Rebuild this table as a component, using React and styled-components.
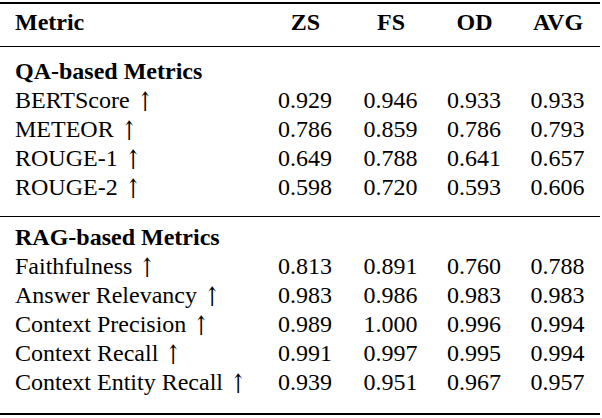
import React from 'react'
import styled, { createGlobalStyle } from 'styled-components'

const GlobalStyle = createGlobalStyle`
  body { margin: 0; background: #fff; }
`

const Table = styled.table`
  margin-top: 2px;
  width: 600px;
  border-collapse: separate;
  border-spacing: 0;
  table-layout: fixed;
  font-family: "Liberation Serif", "Times New Roman", serif;
  font-size: 24px;
  line-height: 29px;
  color: #000;
`

const HeadCell = styled.th`
  box-sizing: border-box;
  width: ${p => p.$w}px;
  padding: 4px 0 9px;
  padding-left: ${p => (p.$left ? '15px' : '0')};
  text-align: ${p => (p.$left ? 'left' : 'center')};
  font-weight: bold;
  border-top: 2px solid #000;
  border-bottom: 1px solid #000;
`

const Row = styled.tr`
  td {
    height: 29px;
    padding-top: ${p => p.$pt || 0}px;
    padding-bottom: ${p => p.$pb || 0}px;
    border-bottom: ${p => (p.$rule ? `${p.$rule}px solid #000` : 'none')};
  }
`

const Cell = styled.td`
  padding-left: 0;
  text-align: center;
  white-space: nowrap;
`

const NameCell = styled(Cell)`
  padding-left: 15px;
  text-align: left;
  font-weight: ${p => (p.$section ? 'bold' : 'normal')};
`

// Liberation Serif has no ↑, so borrow DejaVu's and narrow it a bit
const Arrow = styled.span`
  display: inline-block;
  height: 29px;
  line-height: 29px;
  vertical-align: top;
  margin-left: 1px;
  font-family: "DejaVu Serif", serif;
  font-size: 25px;
  color: #000;
  transform: translateY(1px) scale(0.78, 1.06);
  transform-origin: left center;
`

const groups = [
  {
    title: 'QA-based Metrics',
    pt: 10,
    pb: 14,
    rule: 1,
    rows: [
      ['BERTScore', '0.929', '0.946', '0.933', '0.933'],
      ['METEOR', '0.786', '0.859', '0.786', '0.793'],
      ['ROUGE-1', '0.649', '0.788', '0.641', '0.657'],
      ['ROUGE-2', '0.598', '0.720', '0.593', '0.606'],
    ],
  },
  {
    title: 'RAG-based Metrics',
    pt: 6,
    pb: 16,
    rule: 2,
    rows: [
      ['Faithfulness', '0.813', '0.891', '0.760', '0.788'],
      ['Answer Relevancy', '0.983', '0.986', '0.983', '0.983'],
      ['Context Precision', '0.989', '1.000', '0.996', '0.994'],
      ['Context Recall', '0.991', '0.997', '0.995', '0.994'],
      ['Context Entity Recall', '0.939', '0.951', '0.967', '0.957'],
    ],
  },
]

export default function App() {
  return (
    <>
      <GlobalStyle />
      <Table>
        <thead>
          <tr>
            <HeadCell $left $w={262}>Metric</HeadCell>
            <HeadCell $w={87}>ZS</HeadCell>
            <HeadCell $w={84}>FS</HeadCell>
            <HeadCell $w={83}>OD</HeadCell>
            <HeadCell $w={84}>AVG</HeadCell>
          </tr>
        </thead>
        {groups.map(g => (
          <tbody key={g.title}>
            <Row $pt={g.pt}>
              <NameCell $section colSpan={5}>{g.title}</NameCell>
            </Row>
            {g.rows.map((r, i) => {
              const last = i === g.rows.length - 1
              return (
                <Row key={r[0]} $pb={last ? g.pb : 0} $rule={last ? g.rule : 0}>
                  <NameCell>{r[0]} <Arrow>{'\u2191\uFE0E'}</Arrow></NameCell>
                  {r.slice(1).map((v, j) => (
                    <Cell key={j}>{v}</Cell>
                  ))}
                </Row>
              )
            })}
          </tbody>
        ))}
      </Table>
    </>
  )
}
